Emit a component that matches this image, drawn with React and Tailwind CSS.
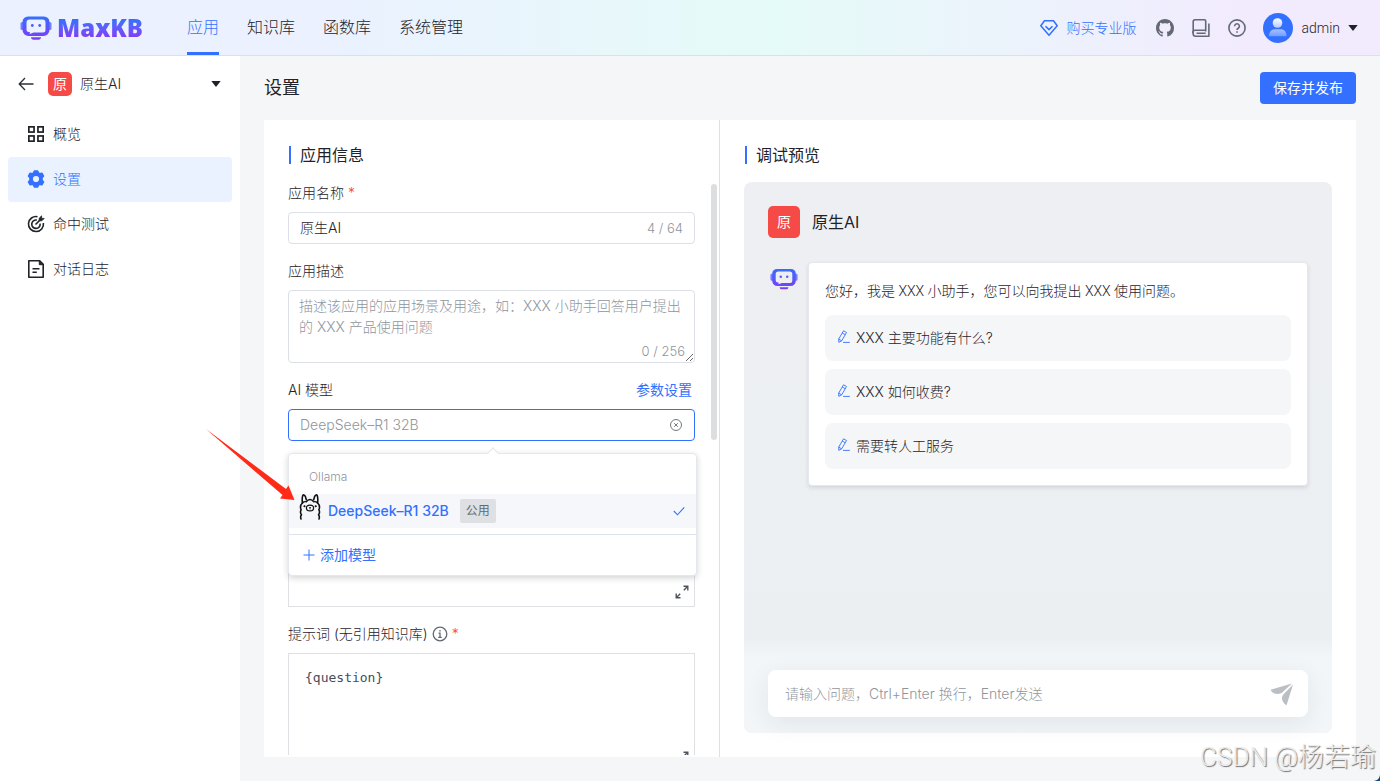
import React, { useState } from 'react';

const menus = [
  { name: '概览', icon: 'grid' },
  { name: '设置', icon: 'gear' },
  { name: '命中测试', icon: 'target' },
  { name: '对话日志', icon: 'log' }
];

const navs = ['应用', '知识库', '函数库', '系统管理'];

const questions = ['XXX 主要功能有什么?', 'XXX 如何收费?', '需要转人工服务'];

const Robot = ({ className, id }) => (
  <svg className={className} viewBox="0 0 32 24" fill="none" aria-hidden="true">
    <defs>
      <linearGradient id={id} x1="16" y1="0" x2="16" y2="24" gradientUnits="userSpaceOnUse">
        <stop stopColor="#3370ff" />
        <stop offset="1" stopColor="#7f3bf5" />
      </linearGradient>
    </defs>
    <rect x="0.5" y="6" width="3" height="8" rx="1.5" fill={`url(#${id})`} opacity="0.75" />
    <rect x="28.5" y="6" width="3" height="8" rx="1.5" fill={`url(#${id})`} opacity="0.75" />
    <path
      fillRule="evenodd"
      fill={`url(#${id})`}
      d="M8 0.5h16a5.5 5.5 0 0 1 5.5 5.5v8a6 6 0 0 1-6 6h-15a6 6 0 0 1-6-6V6A5.5 5.5 0 0 1 8 0.5zM9.5 3.5A3 3 0 0 0 6.500 6.500v7A2.500 2.500 0 0 0 9 16h0.800v2L13.500 16.500h9.500a2.500 2.500 0 0 0 2.500-2.500V6.500a3 3 0 0 0-3-3z"
    />
    <path d="M11 21.300h10c0 1.400-1 2.400-2.400 2.400h-5.200c-1.400 0-2.400-1-2.400-2.400z" fill={`url(#${id})`} />
    <circle cx="12.300" cy="9.500" r="1.400" fill={`url(#${id})`} />
    <circle cx="19.700" cy="9.500" r="1.400" fill={`url(#${id})`} />
  </svg>
);

const Caret = () => (
  <svg className="h-[6px] w-[10px]" viewBox="0 0 10 6" aria-hidden="true">
    <path d="M0.300 0h9.400L5.400 5.600a.6.6 0 0 1-.8 0z" fill="#1f2329" />
  </svg>
);

const Expand = () => (
  <svg className="h-[14px] w-[14px]" viewBox="0 0 14 14" fill="none" stroke="#4e545c" strokeWidth="1.400" aria-hidden="true">
    <path d="M8.500 1.200h4.300v4.300M12.500 1.500L8.800 5.200M5.500 12.800H1.200V8.500M1.500 12.500l3.700-3.700" />
  </svg>
);

const MenuIcon = ({ name }) => {
  if (name === 'grid') {
    return (
      <svg className="h-[18px] w-[18px]" viewBox="0 0 18 18" fill="none" stroke="#1f2329" strokeWidth="1.700" aria-hidden="true">
        <rect x="1.850" y="1.850" width="5.200" height="5.200" />
        <rect x="10.950" y="1.850" width="5.200" height="5.200" />
        <rect x="1.850" y="10.950" width="5.200" height="5.200" />
        <rect x="10.950" y="10.950" width="5.200" height="5.200" />
      </svg>
    );
  }
  if (name === 'gear') {
    return (
      <svg className="h-[18px] w-[18px]" viewBox="0 0 18 18" aria-hidden="true">
        <path
          fillRule="evenodd"
          fill="#3370ff"
          stroke="#3370ff"
          strokeWidth="1.400"
          strokeLinejoin="round"
          d="M7.300 0.900h3.400l.7 1.900 1.300.8 2.200-.5 1.700 3-1.500 1.600v2.600l1.500 1.600-1.700 3-2.200-.5-1.300.8-.7 1.900H7.300l-.7-1.900-1.300-.8-2.200.5-1.700-3 1.500-1.600V7.700L1.400 6.100l1.700-3 2.200.5 1.300-.8zM9 5.200a3.800 3.800 0 1 0 0 7.600 3.800 3.800 0 0 0 0-7.600z"
        />
      </svg>
    );
  }
  if (name === 'target') {
    return (
      <svg className="h-[18px] w-[18px]" viewBox="0 0 18 18" fill="none" stroke="#1f2329" strokeWidth="1.600" aria-hidden="true">
        <path d="M10.500 1.700A7.500 7.500 0 1 0 16.400 8" />
        <path d="M9.800 5.100a4.200 4.200 0 1 0 3.300 3.500" />
        <path d="M8.500 9.500l4.500-4.500" />
        <path d="M12.200 5.800V3.200L14.600 0.800v2.600h2.600l-2.400 2.400z" fill="#1f2329" strokeWidth="0.800" />
      </svg>
    );
  }
  return (
    <svg className="h-[18px] w-[18px]" viewBox="0 0 18 18" fill="none" stroke="#1f2329" strokeWidth="1.600" aria-hidden="true">
      <path d="M1.800 0.800h10.900l3.500 3.500v12.900H1.800z" strokeLinejoin="round" />
      <path d="M12.300 0.800v3.900h3.900" fill="#1f2329" strokeWidth="1" />
      <path d="M5.500 8.700h7M5.500 12.300h4.300" />
    </svg>
  );
};

const Llama = () => (
  <svg className="h-[26px] w-[22px] shrink-0" viewBox="0 0 22 26" fill="none" stroke="#111" strokeWidth="1.600" strokeLinecap="round" aria-hidden="true">
    <path d="M2 25c-.6-1.600-.5-3 .4-4.300C1.300 19 1.200 17.300 2.100 15.800 1 13.300 1.500 10.800 3.500 8.800M20 25c.6-1.600.5-3-.4-4.300 1.100-1.700 1.200-3.400.3-4.900 1.100-2.500.6-5-1.400-7" />
    <path d="M3.500 8.800c-.5-2.700-.4-5.300.3-7.300.8-1.200 2-.4 2.700 1.400l.8 2.900M18.500 8.800c.5-2.700.4-5.300-.3-7.300-.8-1.200-2-.4-2.700 1.400l-.8 2.900" />
    <path d="M3.500 8.800c1.300-1.200 2.600-1.200 3.800-1 1-1.600 2.300-2.300 3.700-2.300s2.700.7 3.700 2.300c1.200-.2 2.500-.2 3.800 1" strokeWidth="1.300" />
    <ellipse cx="11" cy="14" rx="3.600" ry="2.900" strokeWidth="1.200" />
    <path d="M10.300 13.500l.7.500.7-.5M11 14v1" strokeWidth="0.800" />
    <circle cx="5.400" cy="12.200" r="0.700" fill="#111" strokeWidth="0.600" />
    <circle cx="16.600" cy="12.200" r="0.700" fill="#111" strokeWidth="0.600" />
  </svg>
);

const Header = () => (
  <header className="flex h-14 shrink-0 items-center border-b border-[#dee0e3] bg-[linear-gradient(90deg,#ebf1ff_24%,#e5fbf8_56%,#f2ebfe_90%)] pr-[22px] pl-5 font-[Roboto,'Noto_Sans_CJK_SC',sans-serif]">
    <a href="#home" className="flex items-center gap-[5px]">
      <Robot className="h-6 w-8" id="logo-fill" />
      <span className="bg-linear-to-b from-[#3370ff] from-25% to-[#7f3bf5] to-80% bg-clip-text font-['Open_Sans'] text-2xl font-extrabold text-transparent">
        MaxKB
      </span>
    </a>
    <nav className="ml-11 flex h-full gap-7 text-base">
      {navs.map((item, index) => (
        <a
          key={item}
          href="#nav"
          className={
            index === 0
              ? 'flex h-full items-center border-b-3 border-[#3370ff] pt-1 text-[#3370ff]'
              : 'flex h-full items-center border-b-3 border-transparent pt-1 text-[#1f2329]'
          }
        >
          {item}
        </a>
      ))}
    </nav>
    <div className="ml-auto flex items-center gap-[18px]">
      <a href="#pro" className="mr-0.5 flex items-center gap-2 text-sm text-[#3370ff]">
        <svg className="h-[18px] w-[18px]" viewBox="0 0 18 18" fill="none" stroke="#3370ff" strokeWidth="1.500" strokeLinejoin="round" aria-hidden="true">
          <path d="M4.500 1.800h9L17.200 6.800 9 16.200 0.800 6.800z" />
          <path d="M5.500 7.200L9 10.600l3.500-3.400" />
        </svg>
        购买专业版
      </a>
      <a href="#github" aria-label="GitHub">
        <svg className="h-[18px] w-[18px]" viewBox="0 0 16 16" fill="#646a73" aria-hidden="true">
          <path d="M8 0C3.580 0 0 3.580 0 8c0 3.540 2.290 6.530 5.470 7.590.4.070.55-.17.55-.38 0-.19-.01-.82-.01-1.490-2.010.37-2.530-.49-2.690-.94-.09-.23-.48-.94-.82-1.130-.28-.15-.68-.52-.01-.53.63-.01 1.080.58 1.230.82.72 1.210 1.870.87 2.330.66.07-.52.28-.87.51-1.070-1.780-.2-3.640-.89-3.640-3.950 0-.87.31-1.590.82-2.150-.08-.2-.36-1.020.08-2.120 0 0 .67-.21 2.200.82.64-.18 1.320-.27 2-.27s1.360.09 2 .27c1.530-1.040 2.200-.82 2.200-.82.44 1.100.16 1.920.08 2.120.51.56.82 1.270.82 2.150 0 3.070-1.870 3.750-3.650 3.950.29.25.54.73.54 1.480 0 1.070-.01 1.930-.01 2.200 0 .21.15.46.55.38A8.010 8.010 0 0 0 16 8c0-4.420-3.580-8-8-8z" />
        </svg>
      </a>
      <a href="#docs" aria-label="文档">
        <svg className="h-[18px] w-[18px]" viewBox="0 0 18 18" fill="none" stroke="#646a73" strokeWidth="1.600" strokeLinejoin="round" aria-hidden="true">
          <path d="M13.700 12.500V2a1.200 1.200 0 0 0-1.200-1.200H3A1.800 1.800 0 0 0 1.200 2.600V15" />
          <path d="M13.700 11.300H3.200a2 2 0 0 0-2 2.900M16.900 4.500v12.700H3.500c-1.400 0-2.300-.9-2.300-2.200M4.500 14.300h9.200" />
        </svg>
      </a>
      <a href="#help" aria-label="帮助">
        <svg className="h-[18px] w-[18px]" viewBox="0 0 18 18" fill="none" stroke="#646a73" strokeWidth="1.600" aria-hidden="true">
          <circle cx="9" cy="9" r="8.100" />
          <path d="M6.600 7.200a2.400 2.400 0 1 1 3.600 2.100c-.8.500-1.200.8-1.200 1.700" />
          <path d="M9 12.200v1.600" />
        </svg>
      </a>
      <button type="button" className="-ml-px flex items-center gap-2 text-sm text-[#1f2329]">
        <svg className="h-[30px] w-[30px]" viewBox="0 0 30 30" aria-hidden="true">
          <defs>
            <linearGradient id="user-fill" x1="0" y1="5" x2="0" y2="26" gradientUnits="userSpaceOnUse">
              <stop stopColor="#fff" />
              <stop offset="1" stopColor="#fff" stopOpacity="0.2" />
            </linearGradient>
          </defs>
          <circle cx="15" cy="15" r="15" fill="#3370ff" />
          <circle cx="14.500" cy="10" r="4.800" fill="url(#user-fill)" />
          <path d="M6 23.200c0-4.500 2.200-7 6-7h5.500c3.800 0 6 2.500 6 7z" fill="url(#user-fill)" />
        </svg>
        admin
        <Caret />
      </button>
    </div>
  </header>
);

const Sidebar = () => (
  <aside className="w-60 shrink-0 bg-white px-2">
    <div className="flex h-14 items-center pr-[11px] pl-[10px]">
      <button type="button" aria-label="返回">
        <svg className="h-4 w-4" viewBox="0 0 16 16" fill="none" stroke="#2b2f36" strokeWidth="1.300" aria-hidden="true">
          <path d="M7 2L1.200 8 7 14M1.200 8h14.300" />
        </svg>
      </button>
      <button type="button" className="ml-[14px] flex flex-1 items-center text-sm text-[#1f2329]">
        <span className="flex h-6 w-6 items-center justify-center rounded-[5px] bg-[#f54a45] font-normal text-white">原</span>
        <span className="mr-auto ml-2">原生AI</span>
        <Caret />
      </button>
    </div>
    <nav>
      {menus.map((item) => (
        <a
          key={item.name}
          href="#menu"
          className={
            item.name === '设置'
              ? 'flex h-[45px] items-center gap-2 rounded bg-[#ebf2ff] px-[19px] pb-0.5 text-sm text-[#3370ff]'
              : 'flex h-[45px] items-center gap-2 px-[19px] pb-0.5 text-sm text-[#1f2329]'
          }
        >
          <MenuIcon name={item.icon} />
          {item.name}
        </a>
      ))}
    </nav>
  </aside>
);

const SectionTitle = ({ children }) => (
  <h2 className="mb-4 flex h-[22px] items-center gap-[9px] pl-px text-base font-normal text-[#1f2329]">
    <span className="h-[18px] w-0.5 bg-[#3370ff]" />
    {children}
  </h2>
);

const ModelPopup = () => (
  <div className="absolute top-11 -right-0.5 left-0 z-10 rounded border border-[#e4e7ed] bg-white pt-[6px] shadow-[0_2px_6px_rgba(31,35,41,0.2)]">
    <span className="absolute -top-[5px] left-1/2 h-2 w-2 -translate-x-1/2 rotate-45 border-t border-l border-[#e4e7ed] bg-white" />
    <p className="h-[34px] pl-5 text-xs leading-[34px] text-[#8f959e]">Ollama</p>
    <button type="button" className="mb-[6px] flex h-[34px] w-full items-center bg-[#f5f7fa] pr-[11px] pl-[10px] text-left">
      <span className="-mt-2">
        <Llama />
      </span>
      <span className="ml-[7px] text-sm font-medium text-[#3370ff]">DeepSeek–R1 32B</span>
      <span className="ml-[11px] flex h-6 w-9 items-center justify-center rounded-xs bg-[#dee0e3] text-xs font-normal text-[#646a73]">公用</span>
      <svg className="ml-auto h-3 w-3" viewBox="0 0 12 12" fill="none" stroke="#3370ff" strokeWidth="1.100" aria-hidden="true">
        <path d="M0.800 6l3.700 3.800L11.300 2.300" />
      </svg>
    </button>
    <button type="button" className="flex h-[41px] w-full items-center gap-[5px] border-t border-[#dee3ee] pl-[14px] text-sm font-normal text-[#3370ff]">
      <svg className="h-3 w-3" viewBox="0 0 12 12" stroke="#3370ff" strokeWidth="1" aria-hidden="true">
        <path d="M6 0.500v11M0.500 6h11" />
      </svg>
      添加模型
    </button>
  </div>
);

const SettingForm = () => {
  const [name, setName] = useState('原生AI');
  const [desc, setDesc] = useState('');
  const [prompt, setPrompt] = useState('{question}');

  return (
    <form className="relative flex min-h-0 flex-1 flex-col gap-4 overflow-hidden px-6 text-sm text-[#1f2329]">
      <span className="absolute top-0.5 right-0.5 h-64 w-[6px] rounded-full bg-[#dddee0]" />
      <div>
        <label htmlFor="app-name" className="mb-2 block leading-[22px]">
          应用名称 <span className="text-[#f54a45]">*</span>
        </label>
        <div className="flex h-8 items-center rounded border border-[#dcdfe6] px-[11px]">
          <input id="app-name" className="min-w-0 flex-1 outline-none" value={name} onChange={(e) => setName(e.target.value)} />
          <span className="text-[13px] text-[#8f959e]">{name.length} / 64</span>
        </div>
      </div>
      <div>
        <label htmlFor="app-desc" className="mb-2 block leading-[22px]">
          应用描述
        </label>
        <div className="relative">
          <textarea
            id="app-desc"
            className="block h-[73px] w-full resize-y rounded border border-[#dcdfe6] px-[10px] py-1 leading-[21px] outline-none placeholder:text-[#8f959e]"
            placeholder="描述该应用的应用场景及用途，如：XXX 小助手回答用户提出的 XXX 产品使用问题"
            value={desc}
            onChange={(e) => setDesc(e.target.value)}
          />
          <span className="absolute right-[10px] bottom-1 text-[13px] leading-4 text-[#8f959e]">{desc.length} / 256</span>
        </div>
      </div>
      <div className="relative">
        <div className="mb-2 flex justify-between pr-[3px] leading-[22px]">
          <label htmlFor="model">AI 模型</label>
          <button type="button" className="font-normal text-[#3370ff]">参数设置</button>
        </div>
        <div className="relative">
          <div className="flex h-8 items-center rounded border border-[#3370ff] pr-3 pl-[11px]">
            <input id="model" className="min-w-0 flex-1 outline-none placeholder:text-[#8f959e]" placeholder="DeepSeek–R1 32B" />
            <button type="button" aria-label="清空">
              <svg className="h-3 w-3" viewBox="0 0 12 12" fill="none" stroke="#646a73" strokeWidth="0.900" aria-hidden="true">
                <circle cx="6" cy="6" r="5.500" />
                <path d="M4.200 4.200l3.600 3.600M7.800 4.200L4.200 7.800" />
              </svg>
            </button>
          </div>
          <ModelPopup />
        </div>
      </div>
      <div className="relative pt-[30px]">
        <textarea aria-label="系统角色" className="block h-[120px] w-full resize-none border border-[#dee0e3] p-4 outline-none" />
        <button type="button" aria-label="放大" className="absolute right-[6px] bottom-2">
          <Expand />
        </button>
      </div>
      <div className="relative">
        <label htmlFor="prompt" className="mb-2 flex items-center gap-1 leading-[22px]">
          提示词 (无引用知识库)
          <svg className="h-4 w-4" viewBox="0 0 16 16" fill="none" stroke="#646a73" strokeWidth="1.300" aria-hidden="true">
            <circle cx="8" cy="8" r="6.800" />
            <path d="M8 4v1.500M6.500 7.200H8v4M6.200 11.400h3.600" />
          </svg>
          <span className="text-[#f54a45]">*</span>
        </label>
        <textarea
          id="prompt"
          className="block h-[120px] w-full resize-none border border-[#dee0e3] p-4 font-['DejaVu_Sans_Mono'] text-[13px] leading-4 text-[#454c5a] outline-none"
          value={prompt}
          onChange={(e) => setPrompt(e.target.value)}
        />
        <button type="button" aria-label="放大" className="absolute right-[6px] bottom-2">
          <Expand />
        </button>
      </div>
    </form>
  );
};

const ChatPreview = () => {
  const [message, setMessage] = useState('');

  return (
    <div className="flex min-h-0 flex-1 flex-col rounded-lg bg-linear-to-b from-[#eeeff3] to-[#ebeff2]">
      <div className="flex items-center gap-3 px-6 pt-6 text-base font-normal text-[#1f2329]">
        <span className="flex h-8 w-8 items-center justify-center rounded-[5px] bg-[#f54a45] text-sm text-white">原</span>
        原生AI
      </div>
      <div className="flex flex-1 items-start px-6 pt-6 text-sm text-[#1f2329]">
        <div className="mt-[6px] w-10 shrink-0 pl-0.5">
          <Robot className="h-[22px] w-7" id="avatar-fill" />
        </div>
        <div className="flex-1 rounded border border-[#e4e7ed] bg-white p-4 shadow-[0_2px_4px_rgba(31,35,41,0.12)]">
          <p className="mb-3 font-[Roboto,'Noto_Sans_CJK_SC',sans-serif] leading-6">您好，我是 XXX 小助手，您可以向我提出 XXX 使用问题。</p>
          <div className="flex flex-col gap-2">
            {questions.map((item) => (
              <button key={item} type="button" className="flex h-[46px] items-center gap-[6px] rounded-lg bg-[#f5f6f7] px-3 text-left">
                <svg className="mb-1 h-[13px] w-[13px]" viewBox="0 0 13 13" fill="none" stroke="#3370ff" strokeWidth="0.900" strokeLinejoin="round" aria-hidden="true">
                  <path d="M6.500 0.800l3 1.700-4.800 8.300-2.900 1.500-.1-3.200zM5.200 3l3 1.700M1.700 9.100l3 1.700M6 12.400h6.800" />
                </svg>
                {item}
              </button>
            ))}
          </div>
        </div>
      </div>
      <div className="rounded-b-lg bg-linear-to-b from-transparent to-[#f2f6f9] to-20% px-6 pt-8 pb-4">
        <div className="flex h-[47px] items-center rounded-lg bg-white pr-[14px] pl-[17px] shadow-[0_6px_24px_rgba(31,35,41,0.08)]">
          <input
            aria-label="请输入问题"
            className="min-w-0 flex-1 text-sm outline-none placeholder:text-[#8f959e]"
            placeholder="请输入问题，Ctrl+Enter 换行，Enter发送"
            value={message}
            onChange={(e) => setMessage(e.target.value)}
          />
          <button type="button" aria-label="发送">
            <svg className="h-6 w-6" viewBox="0 0 24 24" fill="#bbbfc4" aria-hidden="true">
              <path d="M22 1.600L1.300 7.600c-.5.200-.6.700-.3 1.100 2.700 3.400 6.400 4.200 10.700 2.400z" />
              <path d="M23 2.500L13.300 12.600c-2.200 3.500-1.700 6.700 2.300 10.200.5.400 1 .2 1.200-.3z" />
            </svg>
          </button>
        </div>
      </div>
    </div>
  );
};

const App = () => {
  return (
    <div className="relative flex h-screen flex-col overflow-hidden bg-[#f5f6f7] font-[Inter,'Noto_Sans_CJK_SC',sans-serif] font-light">
      <Header />
      <div className="flex min-h-0 flex-1">
        <Sidebar />
        <main className="flex min-w-0 flex-1 flex-col px-6 pb-6">
          <div className="flex h-16 shrink-0 items-center justify-between">
            <h1 className="text-lg font-normal text-[#1f2329]">设置</h1>
            <button type="button" className="h-8 rounded bg-[#3370ff] px-[13px] text-sm font-normal text-white">
              保存并发布
            </button>
          </div>
          <div className="flex min-h-0 flex-1 bg-white">
            <section className="flex w-5/12 flex-col pt-6 pb-0.5">
              <div className="px-6">
                <SectionTitle>应用信息</SectionTitle>
              </div>
              <SettingForm />
            </section>
            <section className="flex w-7/12 flex-col border-l border-[#dee0e3] p-6">
              <SectionTitle>调试预览</SectionTitle>
              <ChatPreview />
            </section>
          </div>
        </main>
      </div>
      <svg className="pointer-events-none absolute top-[428px] left-[204px] z-20 h-[74px] w-[92px]" viewBox="0 0 92 74" aria-hidden="true">
        <path d="M2 1L82 61 84.500 57.500 90.500 72 76 70.500 78.500 67z" fill="#ff2a17" />
      </svg>
      <p className="pointer-events-none absolute right-1 bottom-1 z-20 font-[Roboto,'Noto_Sans_CJK_SC',sans-serif] text-[26px] text-[#ececec] [text-shadow:1px_1px_1px_rgba(0,0,0,0.55)]">CSDN @杨若瑜</p>
      <svg className="pointer-events-none absolute right-0 bottom-0 h-[6px] w-[6px]" viewBox="0 0 6 6" aria-hidden="true">
        <path d="M6 0v6H0c3.500-.5 5.500-2.500 6-6z" fill="#0b4a86" />
      </svg>
    </div>
  );
};

export default App;
